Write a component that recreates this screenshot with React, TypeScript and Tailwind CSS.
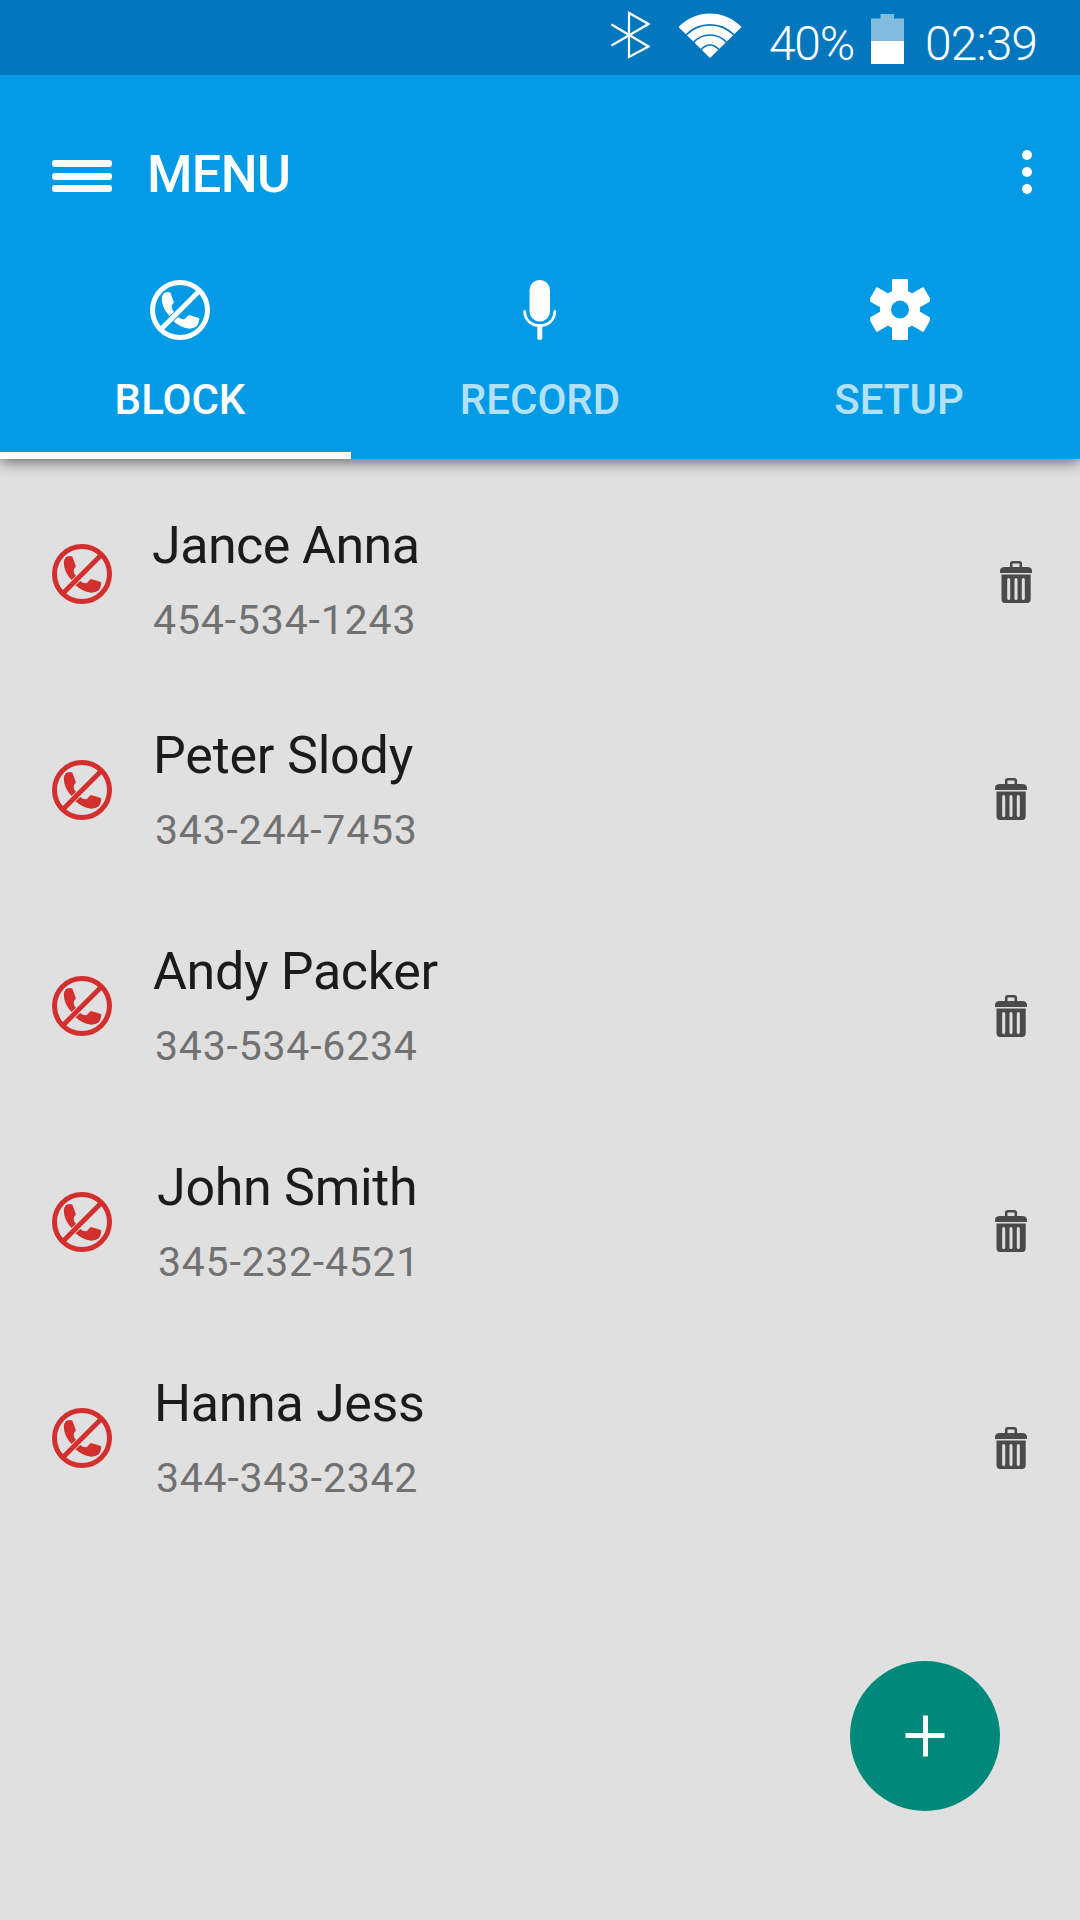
import React from "react";

const contacts = [
  { name: "Jance Anna", phone: "454-534-1243", row: "h-[221px] pt-[57px]", text: "ml-[40px]", nameStyle: "tracking-[-0.55px]", telStyle: "ml-px tracking-[0.85px]", trash: "mr-[48px] mt-[45px]", icon: "mt-[28px]" },
  { name: "Peter Slody", phone: "343-244-7453", row: "h-[210px] pt-[46px]", text: "ml-[41px]", nameStyle: "tracking-[-0.2px]", telStyle: "ml-[2px] tracking-[0.8px]", trash: "mr-[53px] mt-[52px]", icon: "mt-[34px]" },
  { name: "Andy Packer", phone: "343-534-6234", row: "h-[216px] pt-[52px]", text: "ml-[41px]", nameStyle: "tracking-[-0.35px]", telStyle: "ml-[2px] tracking-[0.8px]", trash: "mr-[53px] mt-[53px]", icon: "mt-[34px]" },
  { name: "John Smith", phone: "345-232-4521", row: "h-[216px] pt-[52px]", text: "ml-[45px]", nameStyle: "tracking-[-0.3px]", telStyle: "ml-px tracking-[0.75px]", trash: "mr-[53px] mt-[52px]", icon: "mt-[34px]" },
  { name: "Hanna Jess", phone: "344-343-2342", row: "h-[216px] pt-[52px]", text: "ml-[42px]", nameStyle: "tracking-[-0.35px]", telStyle: "ml-[2px] tracking-[0.75px]", trash: "mr-[53px] mt-[53px]", icon: "mt-[34px]" },
];

function BlockIcon({ className = "" }: { className?: string }) {
  return (
    <svg viewBox="0 0 60 60" className={"size-[60px] shrink-0 " + className} fill="none">
      <circle cx="30" cy="30" r="27.5" stroke="currentColor" strokeWidth="5" />
      <path d="M11.500 48.700 48.700 11.500" stroke="currentColor" strokeWidth="4.800" />
      <path fill="currentColor" d="M14.500 12.800Q17.500 11.500 20.300 12.500L23.800 22Q24 23 22.500 24.200Q21.300 25.500 21.800 28Q22.300 30 24 31.700L19.500 36Q12 28 11.800 19Q11.700 15 14.500 12.800Z" />
      <path fill="currentColor" d="M23.500 41.200L28.200 37Q31 39.500 34 39.300Q35.500 39.200 36.800 36.800Q38 34.800 39.800 35.300L48.200 37.800Q49.800 38.300 49.300 40Q48.500 44.500 46.500 46.500Q43 48.900 38.500 48.600Q30.500 47.500 23.500 41.200Z" />
    </svg>
  );
}

function Bluetooth() {
  return (
    <svg viewBox="0 0 40 50" className="h-[50px] w-[40px]" fill="none" stroke="white" strokeWidth="2.200">
      <path d="M1.500 14.500 38.500 36.500 19 47V3L38.500 14 1.500 35.500" />
    </svg>
  );
}

function Wifi() {
  return (
    <svg viewBox="0 0 64 46" className="h-[46px] w-[64px]">
      <path fill="white" d="M.5 15Q14 1.500 32 1.500T63.500 15L32 46Z" />
      <g fill="none" stroke="#0277bd" strokeWidth="1.700">
        <path d="M8 23Q18 12.800 32 12.800T56 23" />
        <path d="M15.500 30.500Q22 23 32 23T48.500 30.500" />
        <path d="M22.500 38Q27 33 32 33T41.500 38" />
      </g>
    </svg>
  );
}

function Battery() {
  return (
    <svg viewBox="0 0 33 50" className="h-[50px] w-[33px]">
      <path fill="#81bbde" d="M0 4.500H9.500V0H23V4.500H33V27H0Z" />
      <path fill="white" d="M0 27H33V50H0Z" />
    </svg>
  );
}

function Mic() {
  return (
    <svg viewBox="0 0 34 60" className="h-[60px] w-[34px]" fill="none" stroke="white" strokeLinecap="round">
      <rect x="6.500" y="0" width="20.500" height="41.500" rx="10" fill="white" stroke="none" />
      <path strokeWidth="2.800" d="M1.600 31.300C2 40 8 45.500 16.800 45.500S31.500 40 31.800 31.300" />
      <path strokeWidth="5" d="M16.800 47V57.500" />
    </svg>
  );
}

function Gear() {
  return (
    <svg viewBox="-30 -30.500 60 61" className="h-[61px] w-[60px]">
      <g fill="white">
        <rect x="-8" y="-30.500" width="16" height="61" rx="1.200" />
        <rect x="-8" y="-31.500" width="16" height="63" rx="1.200" transform="rotate(60)" />
        <rect x="-8" y="-31.500" width="16" height="63" rx="1.200" transform="rotate(-60)" />
        <circle r="20" />
      </g>
      <circle r="9" fill="#039be5" />
    </svg>
  );
}

function Trash({ className }: { className: string }) {
  return (
    <svg viewBox="0 0 32 42" className={"h-[42px] w-[32px] shrink-0 " + className}>
      <path d="M11.200 7V3Q11.200 1.300 12.800 1.300H19.200Q20.800 1.300 20.800 3V7" fill="none" stroke="#4a4a4a" strokeWidth="2.600" />
      <path d="M0 12V10Q0 6 5 6H27Q32 6 32 10V12Z" fill="#4a4a4a" />
      <path d="M1.500 13.500H30.700V38Q30.700 42 27 42H5Q1.500 42 1.500 38Z" fill="#4a4a4a" />
      <path d="M8.700 18.500V37.500M16 18.500V37.500M23.300 18.500V37.500" stroke="#e0e0e0" strokeWidth="3" strokeLinecap="round" />
    </svg>
  );
}

export default function App() {
  return (
    <div className="relative flex h-[1920px] w-[1080px] flex-col overflow-hidden bg-[#e0e0e0] font-['Roboto',sans-serif]">
      <div className="relative z-10 flex h-[75px] shrink-0 items-start bg-[#0277bd] text-[48px] font-light leading-[56px] text-white">
        <div className="ml-[610px] mt-[10px]"><Bluetooth /></div>
        <div className="ml-[28px] mt-[12px]"><Wifi /></div>
        <span className="ml-[27px] mt-[16px] w-[89px] whitespace-nowrap tracking-[-1.3px]">40%</span>
        <div className="ml-[13px] mt-[14px]"><Battery /></div>
        <span className="ml-[21px] mt-[16px] whitespace-nowrap tracking-[-0.9px]">02:39</span>
      </div>

      <header className="flex h-[384px] shrink-0 flex-col bg-[#039be5] text-white shadow-[0_3px_14px_rgba(0,0,0,0.55)]">
        <div className="flex h-[204px] shrink-0 items-start">
          <div className="ml-[52px] mt-[85px] flex w-[60px] flex-col gap-[5.500px]">
            <span className="h-[7px] rounded-[3px] bg-white" />
            <span className="h-[7px] rounded-[3px] bg-white" />
            <span className="h-[7px] rounded-[3px] bg-white" />
          </div>
          <h1 className="ml-[35px] mt-[70px] text-[52px] font-medium leading-[60px] tracking-[-0.6px]">MENU</h1>
          <div className="ml-auto mr-[48px] mt-[75px] flex flex-col gap-[7px]">
            <span className="size-[10px] rounded-full bg-white" />
            <span className="size-[10px] rounded-full bg-white" />
            <span className="size-[10px] rounded-full bg-white" />
          </div>
        </div>
        <nav className="grid h-[180px] grid-cols-3 text-[42px] font-medium leading-[50px]">
          <div className="flex flex-col items-center">
            <BlockIcon className="mt-px" />
            <span className="mt-[35px]">BLOCK</span>
            <span className="mt-auto h-[7px] w-[351px] self-start bg-[#fcfcfc]" />
          </div>
          <div className="flex flex-col items-center pt-px">
            <Mic />
            <span className="mt-[35px] text-[#b3e1f7]">RECORD</span>
          </div>
          <div className="flex flex-col items-center">
            <Gear />
            <span className="mr-[2px] mt-[35px] text-[#b3e1f7]">SETUP</span>
          </div>
        </nav>
      </header>

      <ul>
        {contacts.map((c) => (
          <li key={c.phone} className={"flex items-start " + c.row}>
            <BlockIcon className={"ml-[52px] text-[#d32f2f] " + c.icon} />
            <div className={"flex flex-col whitespace-nowrap " + c.text}>
              <span className={"text-[52px] leading-[60px] text-[#1b1b1b] " + c.nameStyle}>{c.name}</span>
              <span className={"mt-[20px] text-[41px] leading-[48px] text-[#717171] " + c.telStyle}>{c.phone}</span>
            </div>
            <Trash className={"ml-auto " + c.trash} />
          </li>
        ))}
      </ul>

      <button className="absolute left-[850px] top-[1661px] flex size-[150px] items-center justify-center rounded-full bg-[#00897b]">
        <svg viewBox="0 0 40 42" className="h-[42px] w-[40px]" stroke="white" strokeWidth="5">
          <path d="M.500 20.500H39.500M20.500 .500V41.500" />
        </svg>
      </button>
    </div>
  );
}
